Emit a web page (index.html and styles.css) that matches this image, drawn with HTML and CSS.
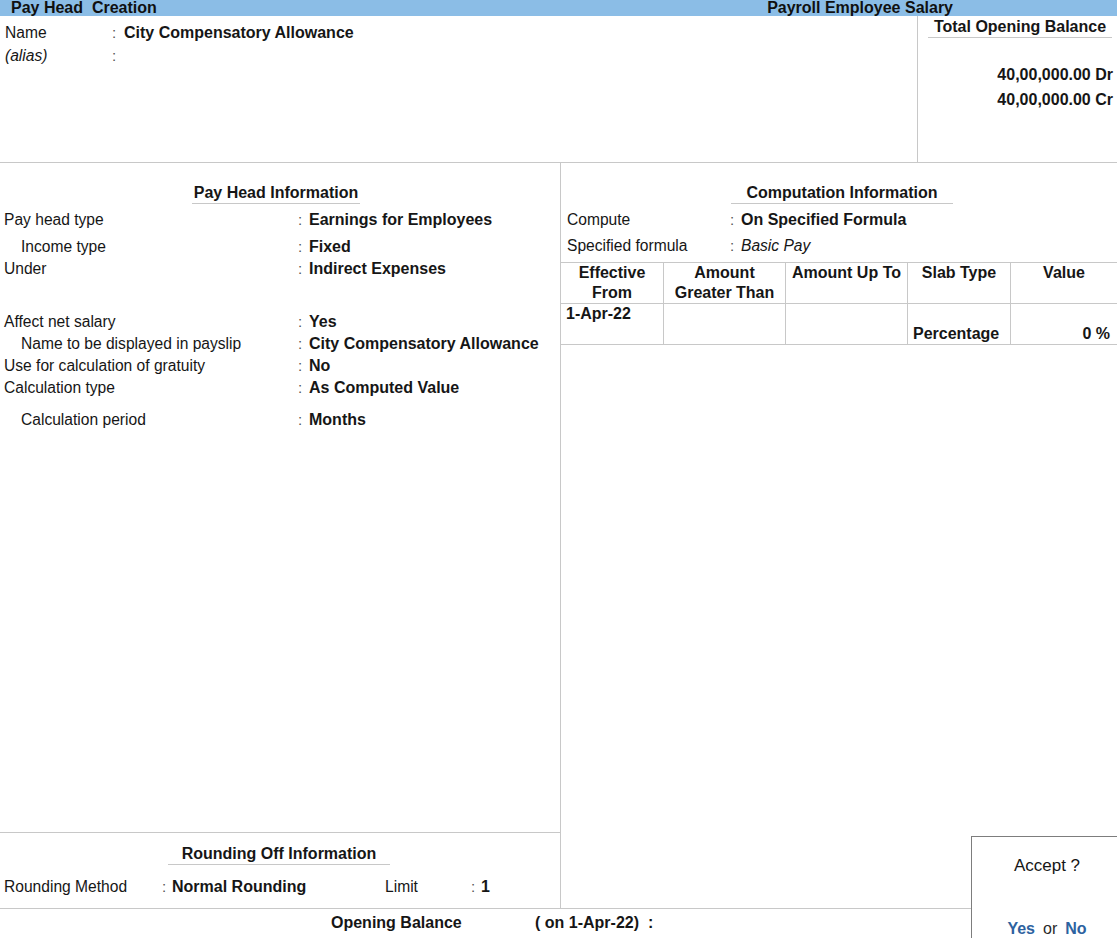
FILE: index.html
```html
<!DOCTYPE html>
<html>
<head>
<meta charset="utf-8">
<title>Pay Head Creation</title>
<link rel="stylesheet" href="styles.css">
</head>
<body>
<div class="screen">
  <div class="topbar">
    <span class="tb-left">Pay Head&nbsp; Creation</span>
    <span class="tb-right">Payroll Employee Salary</span>
  </div>

  <div class="header">
    <div class="hdr-main">
      <div class="hrow"><span class="lbl">Name</span><span class="colon">:</span><span class="val">City Compensatory Allowance</span></div>
      <div class="hrow"><span class="lbl it">(alias)</span><span class="colon">:</span><span class="val"></span></div>
    </div>
    <div class="hdr-bal">
      <div class="bal-title">Total Opening Balance</div>
      <div class="bal-vals">
        <div class="bal-val">40,00,000.00 Dr</div>
        <div class="bal-val">40,00,000.00 Cr</div>
      </div>
    </div>
  </div>

  <div class="main">
    <div class="left">
      <div class="sec-title pay-title"><span>Pay Head Information</span></div>
      <div class="info">
        <div class="row"><span class="lbl">Pay head type</span><span class="colon">:</span><span class="val">Earnings for Employees</span></div>
        <div class="row gap-5"><span class="lbl ind">Income type</span><span class="colon">:</span><span class="val">Fixed</span></div>
        <div class="row"><span class="lbl">Under</span><span class="colon">:</span><span class="val">Indirect Expenses</span></div>
        <div class="row gap-31"><span class="lbl">Affect net salary</span><span class="colon">:</span><span class="val">Yes</span></div>
        <div class="row"><span class="lbl ind">Name to be displayed in payslip</span><span class="colon">:</span><span class="val">City Compensatory Allowance</span></div>
        <div class="row"><span class="lbl">Use for calculation of gratuity</span><span class="colon">:</span><span class="val">No</span></div>
        <div class="row"><span class="lbl">Calculation type</span><span class="colon">:</span><span class="val">As Computed Value</span></div>
        <div class="row gap-10"><span class="lbl ind">Calculation period</span><span class="colon">:</span><span class="val">Months</span></div>
      </div>

      <div class="rounding">
        <div class="sec-title round-title"><span>Rounding Off Information</span></div>
        <div class="round-row">
          <span class="lbl r-lbl">Rounding Method</span><span class="colon">:</span><span class="val r-val">Normal Rounding</span>
          <span class="lbl r-lim">Limit</span><span class="colon">:</span><span class="val">1</span>
        </div>
      </div>
    </div>

    <div class="right">
      <div class="sec-title comp-title"><span>Computation Information</span></div>
      <div class="comp">
        <div class="crow"><span class="lbl">Compute</span><span class="colon">:</span><span class="val">On Specified Formula</span></div>
        <div class="crow gap-4"><span class="lbl">Specified formula</span><span class="colon">:</span><span class="it">Basic Pay</span></div>
      </div>
      <div class="slab">
        <div class="cell th">Effective<br>From</div>
        <div class="cell th">Amount<br>Greater Than</div>
        <div class="cell th">Amount Up To</div>
        <div class="cell th">Slab Type</div>
        <div class="cell th last">Value</div>
        <div class="cell td top">1-Apr-22</div>
        <div class="cell td"></div>
        <div class="cell td"></div>
        <div class="cell td bottom">Percentage</div>
        <div class="cell td bottom num last">0 %</div>
      </div>
    </div>
  </div>

  <div class="footer">
    <span class="ob-label">Opening Balance</span>
    <span class="ob-date">( on 1-Apr-22)&nbsp; :</span>
  </div>

  <div class="accept">
    <div class="acc-q">Accept ?</div>
    <div class="acc-a"><b>Yes</b><span class="or">or</span><b>No</b></div>
  </div>
</div>
</body>
</html>
```

FILE: styles.css
```css
html, body {
  margin: 0;
  padding: 0;
}

body {
  width: 1117px;
  height: 938px;
  overflow: hidden;
  background: #ffffff;
  font-family: "Liberation Sans", Arial, sans-serif;
  color: #161616;
}

.screen {
  position: relative;
  width: 1117px;
  height: 938px;
  overflow: hidden;
}

/* ---------- top bar ---------- */
.topbar {
  display: flex;
  height: 16px;
  background: #8bbde6;
  font-size: 16px;
  font-weight: bold;
  line-height: 15px;
  padding-left: 11px;
  color: #101010;
}

.tb-right {
  margin-left: auto;
  padding-right: 164px;
}

/* ---------- common text ---------- */
.lbl {
  font-size: 15.6px;
  white-space: nowrap;
}

.val {
  font-size: 16px;
  font-weight: bold;
  white-space: nowrap;
}

.it {
  font-style: italic;
  font-size: 15.6px;
}

.colon {
  font-size: 15px;
  color: #555;
}

/* ---------- header ---------- */
.header {
  display: flex;
  height: 146px;
  border-bottom: 1px solid #c8c8c8;
}

.hdr-main {
  flex: 1;
  padding-top: 5px;
}

.hrow {
  display: grid;
  grid-template-columns: 107px 12px auto;
  padding-left: 5px;
  line-height: 23px;
}

.hdr-bal {
  width: 199px;
  border-left: 1px solid #c8c8c8;
}

.bal-title {
  margin: 1px 5px 0 10px;
  text-align: center;
  font-size: 16px;
  font-weight: bold;
  line-height: 20px;
  border-bottom: 1px solid #c8c8c8;
}

.bal-vals {
  margin-top: 24px;
  padding-right: 4px;
  text-align: right;
  font-size: 16px;
  font-weight: bold;
  line-height: 25px;
}

/* ---------- main ---------- */
.main {
  display: flex;
  height: 745px;
  border-bottom: 1px solid #c8c8c8;
}

.left {
  width: 560px;
  border-right: 1px solid #c8c8c8;
  display: flex;
  flex-direction: column;
}

.right {
  flex: 1;
}

.sec-title {
  text-align: center;
  padding-top: 20px;
}

.sec-title span {
  display: inline-block;
  font-size: 16px;
  font-weight: bold;
  line-height: 20px;
  padding: 0 2px 0;
  border-bottom: 1px solid #c8c8c8;
}

.pay-title {
  padding-right: 8px;
}

.comp-title {
  padding-left: 6px;
}

.comp-title span {
  padding: 0 15px 0;
}

.info {
  margin-top: 5px;
}

.row {
  display: grid;
  grid-template-columns: 294px 11px auto;
  padding-left: 4px;
  line-height: 22px;
}

.ind {
  padding-left: 17px;
}

.gap-4 { margin-top: 4px; }
.gap-5 { margin-top: 5px; }
.gap-10 { margin-top: 10px; }
.gap-31 { margin-top: 31px; }

/* ---------- rounding ---------- */
.rounding {
  margin-top: auto;
  border-top: 1px solid #c8c8c8;
  padding-bottom: 10px;
}

.round-title {
  padding-top: 11px;
  padding-right: 2px;
}

.round-title span {
  padding: 0 14px 0;
}

.round-row {
  display: grid;
  grid-template-columns: 158px 10px 213px 86px 10px auto;
  padding-left: 4px;
  margin-top: 11px;
  line-height: 22px;
}

/* ---------- computation ---------- */
.comp {
  margin-top: 5px;
}

.crow {
  display: grid;
  grid-template-columns: 163px 11px auto;
  padding-left: 6px;
  line-height: 22px;
}

.slab {
  margin-top: 5px;
  display: grid;
  grid-template-columns: 103px 122px 122px 103px 1fr;
  border-top: 1px solid #c8c8c8;
  font-size: 16px;
  font-weight: bold;
  line-height: 20px;
}

.cell {
  box-sizing: border-box;
  border-right: 1px solid #c8c8c8;
  border-bottom: 1px solid #c8c8c8;
  height: 41px;
}

.cell.last {
  border-right: none;
}

.th {
  text-align: center;
}

.td {
  display: flex;
  padding: 0 4px 0 5px;
}

.td.top {
  align-items: flex-start;
}

.td.bottom {
  align-items: flex-end;
}

.td.num {
  justify-content: flex-end;
  padding-right: 7px;
}

/* ---------- footer ---------- */
.footer {
  display: flex;
  padding: 4px 0 0 331px;
  font-size: 16px;
  font-weight: bold;
  line-height: 20px;
}

.ob-label {
  width: 204px;
}

/* ---------- accept dialog ---------- */
.accept {
  position: absolute;
  left: 971px;
  top: 836px;
  width: 152px;
  height: 110px;
  box-sizing: border-box;
  border: 1px solid #7d7d7d;
  background: #ffffff;
  text-align: center;
}

.acc-q {
  margin-top: 19px;
  font-size: 17px;
  line-height: 20px;
}

.acc-a {
  margin-top: 43px;
  font-size: 16px;
  line-height: 20px;
}

.acc-a b {
  color: #2d62a0;
}

.acc-a .or {
  margin: 0 8px;
  color: #2a2a2a;
}
```
